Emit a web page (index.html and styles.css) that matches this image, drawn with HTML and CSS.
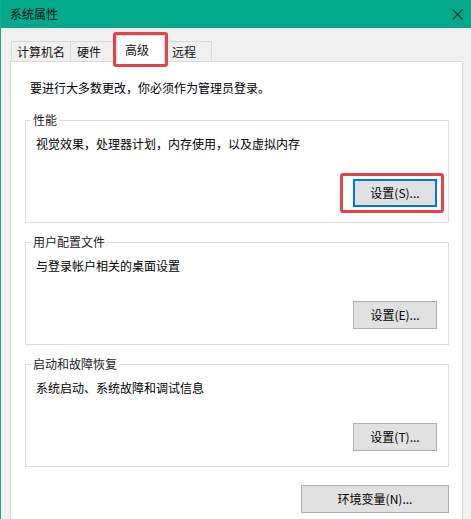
FILE: index.html
```html
<!DOCTYPE html>
<html lang="zh-CN">
<head>
<meta charset="utf-8">
<title>系统属性</title>
<link rel="stylesheet" href="styles.css">
</head>
<body>
<div class="window">
  <div class="titlebar">
    <span class="title">系统属性</span>
    <svg class="close" width="11" height="11" viewBox="0 0 11 11"><path d="M0.5 0.5 L10.5 10.5 M10.5 0.5 L0.5 10.5" stroke="#1c3a32" stroke-width="1.1" fill="none"/></svg>
  </div>
  <div class="body">
    <div class="tabs">
      <div class="tab t1">计算机名</div>
      <div class="tab t2">硬件</div>
      <div class="tab selected">高级<span class="mark mark-tab"></span></div>
      <div class="tab t4">远程</div>
    </div>
    <div class="panel">
      <p class="note">要进行大多数更改，你必须作为管理员登录。</p>
      <fieldset class="group">
        <legend>性能</legend>
        <p class="desc">视觉效果，处理器计划，内存使用，以及虚拟内存</p>
        <div class="actions"><button class="btn default">设置(S)...<span class="mark mark-btn"></span></button></div>
      </fieldset>
      <fieldset class="group">
        <legend>用户配置文件</legend>
        <p class="desc">与登录帐户相关的桌面设置</p>
        <div class="actions"><button class="btn">设置(E)...</button></div>
      </fieldset>
      <fieldset class="group">
        <legend>启动和故障恢复</legend>
        <p class="desc">系统启动、系统故障和调试信息</p>
        <div class="actions"><button class="btn">设置(T)...</button></div>
      </fieldset>
      <div class="env-row"><button class="btn env">环境变量(N)...</button></div>
    </div>
  </div>
</div>
</body>
</html>
```
FILE: styles.css
```css
html, body {
  margin: 0;
  padding: 0;
}
body {
  width: 471px;
  height: 519px;
  overflow: hidden;
  font-family: "Noto Sans CJK SC", "Noto Sans", sans-serif;
  font-size: 12px;
  color: #000;
  background: #f0f0f0;
}
.window {
  height: 519px;
  background: #f0f0f0;
  border-left: 1px solid #19a88d;
  box-sizing: border-box;
  overflow: hidden;
}
.titlebar {
  height: 28px;
  background: #03a98b;
  display: flex;
  align-items: center;
  justify-content: space-between;
  padding: 0 8px 0 9px;
}
.title {
  line-height: 16px;
  color: #111;
}
.close {
  display: block;
}
.body {
  padding: 6px 8px 0 9px;
}
.tabs {
  display: flex;
  align-items: flex-end;
  height: 28px;
  margin-bottom: -1px;
  padding-left: 1px;
  position: relative;
  z-index: 1;
}
.tab {
  box-sizing: border-box;
  height: 20px;
  line-height: 19px;
  margin-bottom: 1px;
  border-top: 1px solid #d9d9d9;
  border-right: 1px solid #d9d9d9;
  background: #f0f0f0;
  color: #111;
}
.t1 {
  width: 60px;
  border-left: 1px solid #d9d9d9;
  padding-left: 5px;
}
.t2 {
  width: 45px;
  padding-left: 6px;
}
.selected {
  position: relative;
  width: 49px;
  height: 27px;
  margin-bottom: 0;
  padding: 6px 0 0 8px;
  line-height: 16px;
  background: #fff;
  border-left: 1px solid #d9d9d9;
}
.t4 {
  width: 47px;
  padding-left: 7px;
}
.panel {
  box-sizing: border-box;
  background: #fff;
  border: 1px solid #d9d9d9;
  border-bottom: none;
  height: 458px;
  padding: 18px 13px 0 14px;
}
.note {
  margin: 0 0 0 5px;
  line-height: 16px;
}
.group {
  margin: 11px 0 0;
  border: 1px solid #dcdcdc;
  padding: 8px 11px 15px 10px;
  min-width: 0;
}
.note + .group {
  margin-top: 16px;
}
.group legend {
  padding: 0 2px;
  margin-left: -5px;
  line-height: 16px;
  color: #1a1a1a;
}
.desc {
  margin: 0;
  line-height: 16px;
}
.actions {
  display: flex;
  justify-content: flex-end;
  margin-top: 27px;
}
.btn {
  position: relative;
  width: 84px;
  height: 28px;
  box-sizing: border-box;
  border: 1px solid #adadad;
  background: #e1e1e1;
  font: inherit;
  font-size: 12px;
  line-height: 16px;
  color: #000;
  padding: 0;
  border-radius: 0;
}
.btn.default {
  border: 2px solid #0078d7;
}
.env-row {
  display: flex;
  justify-content: flex-end;
  margin-top: 18px;
}
.btn.env {
  width: 148px;
}
.mark {
  position: absolute;
  box-sizing: border-box;
  border: 3px solid #e3434b;
  border-radius: 3px;
  pointer-events: none;
}
.mark-tab {
  top: -4px;
  bottom: -5px;
  left: -4px;
  right: -4px;
}
.mark-btn {
  top: -8px;
  bottom: -8px;
  left: -15px;
  right: -9px;
}
```
